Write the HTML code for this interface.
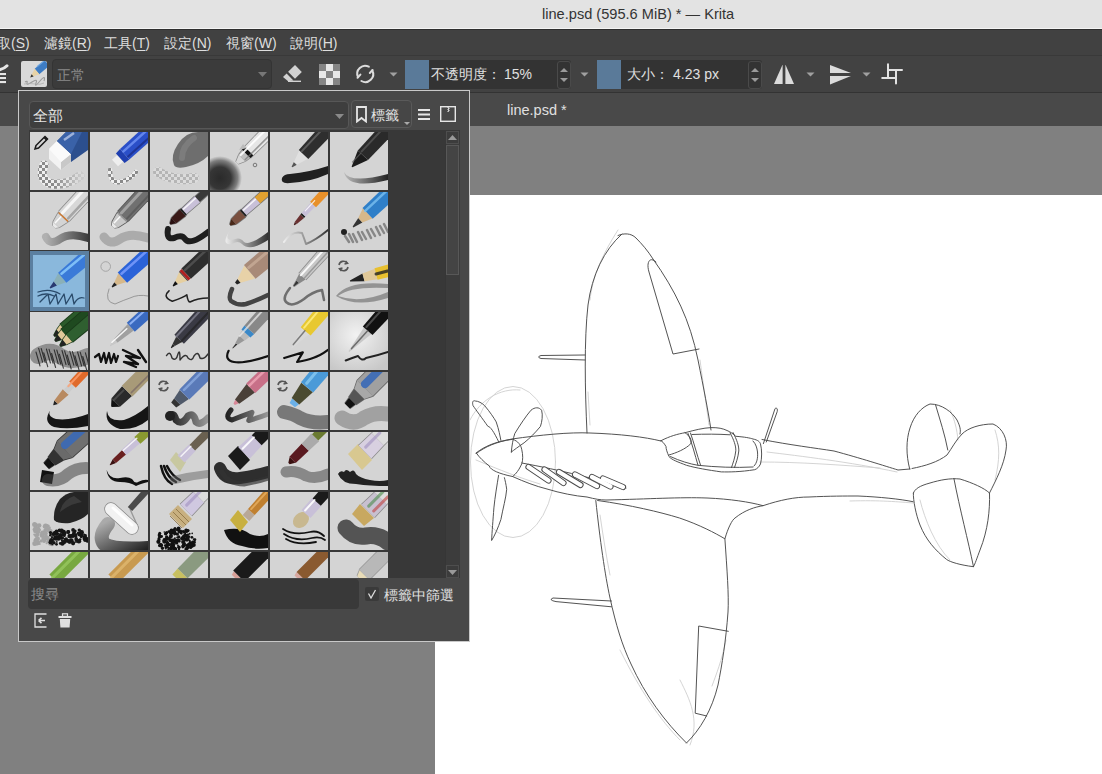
<!DOCTYPE html>
<html><head><meta charset="utf-8">
<style>
*{box-sizing:border-box}
html,body{margin:0;padding:0}
body{width:1102px;height:774px;overflow:hidden;position:relative;background:#808080;font-family:"Liberation Sans",sans-serif;color:#dcdcdc}
.abs{position:absolute}
#title{left:0;top:0;width:1102px;height:29px;background:#e3e3e3;border-bottom:1px solid #f4f4f4}
#title span{position:absolute;left:542px;top:6px;font-size:14.6px;color:#333;white-space:nowrap}
#menubar{left:0;top:29px;width:1102px;height:26px;background:#414141;border-top:1px solid #2e2e2e}
#menubar span{position:absolute;top:5px;font-size:14px;color:#dedede;white-space:nowrap}
#menubar u{text-underline-offset:2px}
#toolbar{left:0;top:55px;width:1102px;height:38px;background:#424242;border-top:1px solid #393939;border-bottom:1px solid #333}
#tabbar{left:0;top:93px;width:1102px;height:33px;background:#494949}
#tabbar span{position:absolute;left:507px;top:9px;font-size:14.5px;color:#e0e0e0}
#canvas{left:435px;top:195px;width:667px;height:579px;background:#fff}
#popup{left:18px;top:90px;width:452px;height:552px;background:#484848;border:1px solid #c9c9c9}
.tile{position:absolute;width:58px;height:58px;background:#d3d3d3;overflow:hidden}
</style></head><body>
<div id="title" class="abs"><span>line.psd (595.6 MiB) * — Krita</span></div>
<div id="menubar" class="abs">
<span style="left:-3px">取(<u>S</u>)</span>
<span style="left:44px">濾鏡(<u>R</u>)</span>
<span style="left:104px">工具(<u>T</u>)</span>
<span style="left:164px">設定(<u>N</u>)</span>
<span style="left:226px">視窗(<u>W</u>)</span>
<span style="left:290px">說明(<u>H</u>)</span>
</div>
<div id="toolbar" class="abs">
<svg class="abs" style="left:0;top:6px" width="14" height="24" viewBox="0 0 14 24"><path d="M-1 7.8 Q4 7 7 3.8" stroke="#e6e6e6" stroke-width="3" fill="none" stroke-linecap="round"/><rect x="0" y="11" width="6" height="2.1" fill="#e6e6e6"/><rect x="0" y="15" width="6" height="2.1" fill="#e6e6e6"/><rect x="0" y="19" width="6" height="2.1" fill="#e6e6e6"/></svg>
<div class="abs" style="left:21px;top:5px;width:26px;height:26px;background:#d9d9d9;border-radius:2px;overflow:hidden">
<svg width="26" height="26" viewBox="0 0 26 26"><path d="M13.7 7.8 L18.3 13.2 L28.3 4.7 L23.7 -0.7 Z" fill="#3d7cc4"/><path d="M16 5.8 L26 -2.5" stroke="#6aa3e0" stroke-width="1.2"/><path d="M13.7 7.8 L18.3 13.2 L9.2 16.4 Z" fill="#e6d2a6"/><path d="M10.6 13.3 L12.6 15.4 L9.2 16.4 Z" fill="#333"/><path d="M4 21 Q7 19 6 22 T11 21 T15 22 T19 20 T23 20" stroke="#9a9a9a" stroke-width="1.1" fill="none"/><path d="M3 23 Q9 22 14 23 T23 22" stroke="#b0b0b0" stroke-width="0.8" fill="none"/></svg></div>
<div class="abs" style="left:52px;top:3px;width:220px;height:30px;background:#3b3b3b;border:1px solid #343434;border-radius:4px">
<span class="abs" style="left:4px;top:7px;font-size:14px;color:#8a8a8a">正常</span>
<svg class="abs" style="left:205px;top:12px" width="9" height="5"><path d="M0 0H9L4.5 5Z" fill="#777"/></svg></div>
<svg class="abs" style="left:276px;top:2px" width="32" height="32" viewBox="0 0 32 32"><path d="M19 7 L25.8 13.9 L19 20.7 L12.1 13.8 Z" fill="#d2d2d2"/><path d="M7 18.9 L10.6 15.4 L17.4 22.6 L12.1 23.3 Z" fill="#d2d2d2"/><rect x="12" y="22.6" width="13" height="1.4" fill="#d2d2d2"/></svg>
<svg class="abs" style="left:319px;top:8px" width="21" height="21" viewBox="0 0 21 21"><rect width="21" height="21" fill="#e8e8e8"/><rect x="0" y="0" width="7" height="7" fill="#858585"/><rect x="14" y="0" width="7" height="7" fill="#858585"/><rect x="7" y="7" width="7" height="7" fill="#858585"/><rect x="0" y="14" width="7" height="7" fill="#858585"/><rect x="14" y="14" width="7" height="7" fill="#858585"/></svg>
<svg class="abs" style="left:350px;top:2px" width="32" height="32" viewBox="0 0 32 32"><path d="M18.8 8.7 A7.9 7.9 0 0 0 8 19" stroke="#dcdcdc" stroke-width="2" fill="none" stroke-linecap="round"/><path d="M11.4 23 A7.9 7.9 0 0 0 22.3 12.5" stroke="#dcdcdc" stroke-width="2" fill="none" stroke-linecap="round"/><path d="M7.5 19.8 L10.4 16.6" stroke="#dcdcdc" stroke-width="2" stroke-linecap="round"/><path d="M22.6 12 L19.8 15" stroke="#dcdcdc" stroke-width="2" stroke-linecap="round"/></svg>
<svg class="abs" style="left:389px;top:16px" width="9" height="5"><path d="M0.5 0.5H8.5L4.5 4.5Z" fill="#a0a0a0"/></svg>
<div class="abs" style="left:405px;top:4px;width:24px;height:29px;background:#5a7a99"></div>
<div class="abs" style="left:429px;top:4px;width:142px;height:29px;background:#333;border-radius:0 3px 3px 0"></div>
<span class="abs" style="left:431px;top:10px;font-size:14px;color:#e0e0e0;white-space:nowrap">不透明度：<span style="margin-left:3px">15%</span></span>
<div class="abs" style="left:557px;top:5px;width:14px;height:28px;border:1px solid #4a4a4a;border-radius:3px"></div>
<svg class="abs" style="left:559px;top:11px" width="10" height="16"><path d="M1 5L5 1L9 5Z" fill="#9a9a9a"/><path d="M1 11L5 15L9 11Z" fill="#9a9a9a"/></svg>
<svg class="abs" style="left:580px;top:16px" width="9" height="5"><path d="M0.5 0.5H8.5L4.5 4.5Z" fill="#a0a0a0"/></svg>
<div class="abs" style="left:597px;top:4px;width:24px;height:29px;background:#5a7a99"></div>
<div class="abs" style="left:621px;top:4px;width:141px;height:29px;background:#333;border-radius:0 3px 3px 0"></div>
<span class="abs" style="left:627px;top:10px;font-size:14px;color:#e0e0e0;white-space:nowrap">大小：<span style="margin-left:4px">4.23 px</span></span>
<div class="abs" style="left:748px;top:5px;width:14px;height:28px;border:1px solid #4a4a4a;border-radius:3px"></div>
<svg class="abs" style="left:750px;top:11px" width="10" height="16"><path d="M1 5L5 1L9 5Z" fill="#9a9a9a"/><path d="M1 11L5 15L9 11Z" fill="#9a9a9a"/></svg>
<svg class="abs" style="left:774px;top:9px" width="21" height="20" viewBox="0 0 21 20"><path d="M8.6 -0.5 L8.6 19 L0 19 Z" fill="#dcdcdc"/><path d="M11.4 -0.5 L11.4 19 L20 19 Z" fill="#dcdcdc"/></svg>
<svg class="abs" style="left:806px;top:16px" width="9" height="5"><path d="M0.5 0.5H8.5L4.5 4.5Z" fill="#a0a0a0"/></svg>
<svg class="abs" style="left:830px;top:9px" width="21" height="20" viewBox="0 0 21 20"><path d="M0 0 L21 8 L0 8 Z" fill="#dcdcdc"/><path d="M0 11 L21 11 L0 19.5 Z" fill="#dcdcdc"/></svg>
<svg class="abs" style="left:862px;top:16px" width="9" height="5"><path d="M0.5 0.5H8.5L4.5 4.5Z" fill="#a0a0a0"/></svg>
<svg class="abs" style="left:876px;top:2px" width="32" height="32" viewBox="0 0 32 32"><path d="M12 6.2 V19.8 M12 12 H26 M20 12 V25.4 M6.2 20 H20" stroke="#e2e2e2" stroke-width="2" fill="none" stroke-linecap="round"/></svg>
</div>
<div id="tabbar" class="abs"><span>line.psd *</span></div>
<div id="canvas" class="abs"></div>
<svg class="abs" style="left:0;top:0" width="1102" height="774" viewBox="0 0 1102 774">
<defs><clipPath id="cv"><rect x="435" y="195" width="667" height="579"/></clipPath></defs>
<g clip-path="url(#cv)" fill="none" stroke-linecap="round" stroke-linejoin="round">
<g stroke="#cfcfcf" stroke-width="0.9">
<ellipse cx="513" cy="462" rx="42.5" ry="75.5"/>
<path d="M470 420 C480 400 500 388 520 390"/>
<path d="M767 452 C800 456 850 462 897 472"/>
<path d="M760 462 C800 462 840 465 880 468"/>
<path d="M850 501 C880 500 900 502 913 503"/>
<path d="M590 300 C592 280 600 258 618 230"/>
<path d="M700 360 C704 390 707 410 709 425"/>
<path d="M588 392 L590 425"/>
<path d="M600 515 C603 535 606 555 610 575"/>
<path d="M680 680 C690 700 700 720 690 745"/>
<path d="M620 650 C640 690 660 720 680 740"/>
<path d="M950 410 C955 420 957 430 958 440"/>
<path d="M995 430 C1000 445 1000 460 995 480"/>
<path d="M920 500 C925 520 935 545 950 560"/>
<path d="M726 640 C722 660 716 675 712 686"/>
<path d="M476 460 C500 470 520 478 540 484"/>
</g>
<g stroke="#4a4a4a" stroke-width="0.95">
<path d="M587 433 C585 390 584 340 588 305 C592 275 604 250 622 234"/>
<path d="M618 235.5 C624 233 631 233 636 238 C642 244 648 251 653 259 C675 290 690 320 698 360 C704 390 708 410 711 430"/>
<path d="M656 262 C650 256 646 262 649 272 L673 354 L699 349"/>
<path d="M585 355 L541 355.5 Q536 357 541 358.5 L585 360"/>
<path d="M476 453 C485 446 495 442 512 439 C540 435 570 432 590 433 C620 434 645 437 661 441"/>
<path d="M661 440.7 C670 436 678 434 685 432.7 C695 430 703 428 711 427.6 C718 427.5 723 428.5 727 430.5 C731 432 733 434 735.8 436.3 C745 437 750 438 753 439 C758 440 760 442 760.5 444 C762 450 762 458 760.5 464 C759 467 757 469 754.7 469.7 C740 472 730 472 721.3 471.9 C708 470 696 468 686.5 465.3 C678 462 672 460 669 456.6 C667 452 666 449 666 446.5 C664 443 662 441 661 440.7 Z"/>
<path d="M685 432.7 C690 436 692 440 690.8 443.6 C686 449 676 453 669 455"/>
<path d="M688 433.4 C692 443 695 455 698 465.3"/>
<path d="M690.5 433 C694 443 697 455 700.5 465"/>
<path d="M730 432.7 C734 440 736 446 735.8 450.8 C735 458 733 463 731.5 467.5"/>
<path d="M733 432.5 C737 440 739 446 738.8 451 C738 458 736 463 734.5 467.5"/>
<path d="M692 434.5 C705 434 718 434 730 434.8"/>
<path d="M670.5 456.6 C680 461 690 464 698 465.3 C715 467 735 468 753 467"/>
<path d="M753 441 C756 444 757 448 757.5 452 C758 458 757 463 754 466"/>
<path d="M762 439.5 C790 445 815 448 834 451 C860 458 885 466 898 470 L910 469"/>
<path d="M763.4 443.6 L775 408.7 C776 407.5 778 408 777.2 411.6 L766.3 442"/>
<path d="M909.7 469 C906 455 906 440 910 428 C914 415 922 407 930 404 C942 404 952 412 957 420 C960 426 961 430 960 434"/>
<path d="M935.5 404.7 C940 420 945 435 947.8 450"/>
<path d="M912 468.5 C925 466 938 462 947 455 C952 448 956 440 962 434 C968 428 980 424 993 424 C1003 428 1008 440 1006 450 C1004 465 996 480 989.5 493"/>
<path d="M913.4 493 C915 489 919 486 930 483 C940 480 950 478 960 479 C973 483 984 488 989.5 493 C990 510 988 530 980 550 C977 558 975 564 973.5 566.7 C960 565 950 562 946.5 559.4 C935 550 926 540 920 525 C916 515 913 500 913.4 493"/>
<path d="M953.9 478.4 C960 510 968 540 973.5 566.7"/>
<path d="M512.5 476.5 C525 482 535 486 547 489 C560 493 575 496 587 497 C595 499 600 500 606 500 C650 499 680 497 707 498 C730 499 750 502 763 505.7 C780 500 795 497 809 497 C830 496 845 496 858 496 C880 497 900 499 913 501.7"/>
<path d="M595.8 500.5 C600 540 605 575 610 598 C616 625 622 645 631 664 C645 695 665 722 686.5 743"/>
<path d="M724.9 538.8 C727 570 729 595 728 612 C726 640 722 665 718 685 C712 710 700 730 686.5 743"/>
<path d="M597.6 500.5 C630 505 660 512 679.5 518 C700 525 715 533 724.9 538.8 C728 528 732 520 735 518 C745 510 755 507 763 505.7"/>
<path d="M728.3 631.3 L698.7 626 L695.2 713.2 L706.7 716"/>
<path d="M611.5 601 L553 598 Q548 600 556 601.6 L611.5 606.8"/>
<path d="M476.5 453.3 C485 447 496 441.6 512.5 439.3 C518 441 521 445 521.8 449.8 C523 455 523 460 521.8 463.7 C519 470 516 474 512.5 476.5 C500 474 490 470 489.3 466 C484 462 479 457 476.5 453.3 Z"/>
<path d="M498.6 441.6 C494 432 490 426 488 426.5 C482 418 476 410 473 405.6 C472 402 473 400 475.3 401 C478 401 482 403 484.6 405.6 C490 412 494 418 496.2 421.9 C499 430 500 436 500.9 440.5"/>
<path d="M511.3 452 C512 445 513 439 514.8 433.5 C520 425 526 416 531 410.2 C535 407 539 407 541.6 410.2 C543 415 542 422 540.4 426.5 C535 433 530 438 524.1 442.8 C518 447 514 450 511.3 452 Z"/>
<path d="M498.6 475.3 C497 485 495 497 493.9 507.9 C493 520 492 532 491.6 540.5 C495 535 498 528 500.9 519.5 C503 508 506 498 506.7 489.3 C506 484 505 480 504.4 477.7"/>
<path d="M521.8 463 C560 470 600 480 626 488"/>
</g>
<g stroke="#4a4a4a" stroke-width="6.2">
<path d="M528.5 467 L548.5 480.5"/><path d="M544.5 469.5 L563.5 483"/><path d="M559 472 L580.5 485"/><path d="M575 474.5 L597 486"/><path d="M592 477 L610.5 486.5"/><path d="M603 478.5 L623 487"/>
</g>
<g stroke="#ffffff" stroke-width="4.3">
<path d="M528.5 467 L548.5 480.5"/><path d="M544.5 469.5 L563.5 483"/><path d="M559 472 L580.5 485"/><path d="M575 474.5 L597 486"/><path d="M592 477 L610.5 486.5"/><path d="M603 478.5 L623 487"/>
</g>
</g></svg>
<div id="popup" class="abs">
<div class="abs" style="left:10px;top:10px;width:320px;height:28px;background:#3e3e3e;border:1px solid #575757;border-radius:4px">
<span class="abs" style="left:3px;top:5px;font-size:14.5px;color:#e6e6e6">全部</span>
<svg class="abs" style="left:305px;top:12px" width="9" height="5"><path d="M0 0H9L4.5 5Z" fill="#8a8a8a"/></svg></div>
<div class="abs" style="left:332px;top:9px;width:61px;height:28px;background:#464646;border:1px solid #5a5a5a;border-radius:4px">
<svg class="abs" style="left:4px;top:5px" width="11" height="17" viewBox="0 0 11 17"><path d="M1 1 H10 V15.5 L5.5 12 L1 15.5 Z" stroke="#e6e6e6" stroke-width="1.8" fill="none"/></svg>
<span class="abs" style="left:19px;top:6px;font-size:14px;color:#e6e6e6">標籤</span>
<svg class="abs" style="left:52px;top:21px" width="6" height="3"><path d="M0 0H6L3 3Z" fill="#aaa"/></svg></div>
<svg class="abs" style="left:399px;top:18px" width="12" height="11" viewBox="0 0 12 11"><rect y="0" width="12" height="2" fill="#e6e6e6"/><rect y="4.5" width="12" height="2" fill="#e6e6e6"/><rect y="9" width="12" height="2" fill="#e6e6e6"/></svg>
<svg class="abs" style="left:421px;top:15px" width="16" height="16" viewBox="0 0 16 16"><rect x="0.7" y="0.7" width="14.6" height="14.6" stroke="#e6e6e6" stroke-width="1.4" fill="none"/><path d="M8 1 v1 h1 v1 h-1 v1 h1 v1 h-1 v1" stroke="#e6e6e6" stroke-width="1" fill="none"/></svg>
<div id="list" class="abs" style="left:10px;top:39px;width:431px;height:448px;background:#383838;overflow:hidden">
<div id="grid" class="abs" style="left:1px;top:2px;width:360px;height:446px"><svg class="abs" style="left:0;top:0" width="360" height="446" viewBox="0 0 360 446"><defs>
<pattern id="chk" width="6" height="6" patternUnits="userSpaceOnUse"><rect width="6" height="6" fill="#f0f0f0"/><rect width="3" height="3" fill="#8a8a8a"/><rect x="3" y="3" width="3" height="3" fill="#8a8a8a"/></pattern>
<pattern id="chk2" width="6" height="6" patternUnits="userSpaceOnUse"><rect width="6" height="6" fill="#e0e0e0"/><rect width="3" height="3" fill="#a8a8a8"/><rect x="3" y="3" width="3" height="3" fill="#a8a8a8"/></pattern>
<radialGradient id="rg1"><stop offset="0" stop-color="#2a2a2a"/><stop offset="0.5" stop-color="#363636"/><stop offset="0.8" stop-color="#444" stop-opacity="0.6"/><stop offset="1" stop-color="#555" stop-opacity="0"/></radialGradient>
<radialGradient id="rg2" cx="0.45" cy="0.4" r="0.7"><stop offset="0" stop-color="#f2f2f2"/><stop offset="1" stop-color="#c8c8c8"/></radialGradient>
<linearGradient id="lg1" x1="0" x2="1"><stop offset="0" stop-color="#bbb"/><stop offset="1" stop-color="#222"/></linearGradient>
<linearGradient id="lg2" x1="0" x2="1"><stop offset="0" stop-color="#aaa"/><stop offset="1" stop-color="#222"/></linearGradient>
<linearGradient id="lg3" x1="0" x2="1"><stop offset="0" stop-color="#eee"/><stop offset="1" stop-color="#333"/></linearGradient>
<clipPath id="tc"><rect width="58" height="58"/></clipPath>
<linearGradient id="fade" x1="0" x2="1"><stop offset="0.3" stop-color="#d4d4d4" stop-opacity="0"/><stop offset="1" stop-color="#d4d4d4" stop-opacity="0.85"/></linearGradient>
<linearGradient id="lg4" x1="0" x2="1"><stop offset="0" stop-color="#222"/><stop offset="1" stop-color="#999"/></linearGradient>
<linearGradient id="lg5" x1="0" y1="0" x2="1" y2="1"><stop offset="0" stop-color="#aaa"/><stop offset="1" stop-color="#222"/></linearGradient>
</defs><g transform="translate(0 0)"><svg width="58" height="58" viewBox="0 0 58 58"><rect width="58" height="58" fill="#d4d4d4"/><path d="M6 13.5 L15 4.5 L17.5 7 L8.5 16 L5 17 Z" fill="none" stroke="#1a1a1a" stroke-width="1.5"/><path d="M13.5 6 L15 4.5 L17.5 7 L16 8.5Z" fill="#1a1a1a"/><path d="M14 33 Q8 48 22 52 Q36 54 50 44" stroke="url(#chk)" stroke-width="9" fill="none" stroke-linecap="round" stroke-linejoin="round" opacity="1"/><path d="M14 33 Q8 48 22 52 Q36 54 50 44" stroke="url(#fade)" stroke-width="10" fill="none" stroke-linecap="round" stroke-linejoin="round" opacity="1"/><path d="M19 17 L27 9 L41 22 L41 30 L31 38 L19 27 Z" fill="#f2f2f2"/><path d="M31 30 L41 22 L41 30 L31 38Z" fill="#c8c8c8"/><path d="M19 17 L27 9 L41 22 L31 30Z" fill="#fafafa"/><path d="M27 9 L36 0 L58 0 L58 18 L41 30 L41 22 Z" fill="#2c4f8e"/><path d="M27 9 L36 0 L52 0 L41 22Z" fill="#3a62a8"/><path d="M34 8 L44 1" stroke="#c8d4f0" stroke-width="2.5" opacity="0.7"/></svg></g><g transform="translate(60 0)"><svg width="58" height="58" viewBox="0 0 58 58"><rect width="58" height="58" fill="#d4d4d4"/><path d="M20 38 Q20 52 30 50 Q40 48 46 40" stroke="url(#chk)" stroke-width="4.5" fill="none" stroke-linecap="round" stroke-linejoin="round" opacity="1"/><path d="M28 34.3 L33.2 29.7 L27.2 23 L22 27.7 Z" fill="#eeeeee"/><path d="M34.6 31.1 L39.3 27.5 L30 17.1 L25.9 21.5 Z" fill="#1f3fb0"/><path d="M39.3 27.5 L73.1 -2.2 L63.1 -13.4 L30 17.1 Z" fill="#2a4fc8"/><path d="M33.4 19.4 L59.4 -4" stroke="#6a8cf0" stroke-width="2.5" opacity="0.9" stroke-linecap="round"/><path d="M38.1 24.6 L64.1 1.2" stroke="#1a2a80" stroke-width="2" opacity="0.7" stroke-linecap="round"/></svg></g><g transform="translate(120 0)"><svg width="58" height="58" viewBox="0 0 58 58"><rect width="58" height="58" fill="#d4d4d4"/><path d="M8 40 Q25 50 44 46" stroke="url(#chk2)" stroke-width="10" fill="none" stroke-linecap="round" stroke-linejoin="round" opacity="0.7"/><path d="M24 33 Q20 24 28 12 Q36 0 48 0 L58 0 L58 24 Q50 32 36 35 Q26 37 24 33Z" fill="#6e6e6e"/><path d="M32 26 Q32 14 44 6" stroke="#8a8a8a" stroke-width="6" fill="none" opacity="0.5" stroke-linecap="round"/></svg></g><g transform="translate(180 0)"><svg width="58" height="58" viewBox="0 0 58 58"><rect width="58" height="58" fill="#d4d4d4"/><circle cx="10" cy="46" r="22" fill="url(#rg1)"/><path d="M28.6 32.6 L35.7 29.8 L28.2 22.3 L25.4 29.4 Z" fill="#888"/><path d="M35.7 29.8 L40.6 26.3 L31.7 17.4 L28.2 22.3 Z" fill="#888"/><path d="M41 26.6 L43.8 23.8 L34.2 14.2 L31.4 17 Z" fill="#888"/><path d="M43.8 23.8 L65.4 2.9 L55.1 -7.4 L34.2 14.2 Z" fill="#888"/><path d="M28.1 32.1 L35.1 29.2 L28.8 22.9 L25.9 29.9 Z" fill="#d8d8d8"/><path d="M35.1 29.2 L40.1 25.7 L32.3 17.9 L28.8 22.9 Z" fill="#c0c0c0"/><path d="M40.4 26.1 L43.3 23.2 L34.8 14.7 L31.9 17.6 Z" fill="#111"/><path d="M43.3 23.2 L64.8 2.4 L55.6 -6.8 L34.8 14.7 Z" fill="#e6e6e6"/><path d="M30.5 23.2 L58.8 -5.1" stroke="#fff" stroke-width="2" opacity="0.9" stroke-linecap="round"/><path d="M35.1 27.8 L63.4 -0.5" stroke="#777" stroke-width="1.5" opacity="0.7" stroke-linecap="round"/><circle cx="45" cy="33" r="1.8" fill="none" stroke="#777" stroke-width="1"/><path d="M29 18 L33 12 L37 16Z" fill="#bbb"/></svg></g><g transform="translate(240 0)"><svg width="58" height="58" viewBox="0 0 58 58"><rect width="58" height="58" fill="#d4d4d4"/><path d="M12 46 Q14 42 20 42 Q40 40 58 34 L58 42 Q40 50 20 51 Q10 52 12 46Z" fill="#202020"/><path d="M22.4 35.3 L26.9 32.7 L23.9 30 L21.6 34.7 Z" fill="#555"/><path d="M26.9 32.7 L38 26.7 L29.2 18.5 L23.9 30 Z" fill="#e0e0e0"/><path d="M38.3 27 L69.8 -5.2 L58.8 -15.5 L28.8 18.1 Z" fill="#2e2e2e"/><path d="M31.7 19.4 L52.2 -2.5" stroke="#666" stroke-width="2" opacity="0.8" stroke-linecap="round"/></svg></g><g transform="translate(300 0)"><svg width="58" height="58" viewBox="0 0 58 58"><rect width="58" height="58" fill="#d4d4d4"/><path d="M14 40 Q20 52 58 42 L58 48 Q18 58 14 40Z" fill="url(#lg1)"/><path d="M22.4 35.3 L38 28.1 L27.8 18.5 L21.6 34.7 Z" fill="#1c1c1c"/><path d="M38 28.1 L69.1 -4.5 L58.1 -14.7 L27.8 18.5 Z" fill="#2a2a2a"/><path d="M22.5 30 L30.7 21.3" stroke="#666" stroke-width="1.2" opacity="0.7" stroke-linecap="round"/><path d="M31.7 19.4 L52.2 -2.5" stroke="#555" stroke-width="2" opacity="0.8" stroke-linecap="round"/></svg></g><g transform="translate(0 60)"><svg width="58" height="58" viewBox="0 0 58 58"><rect width="58" height="58" fill="#d4d4d4"/><path d="M16 45 Q20 54 30 47 Q40 40 58 46" stroke="url(#lg2)" stroke-width="8" fill="none" stroke-linecap="round" stroke-linejoin="round" opacity="0.85"/><path d="M25.7 36.6 L29.6 36.1 L22.5 29.5 L22.3 33.4 Z" fill="#8a8a8a"/><path d="M29.6 36.1 L38.2 30.5 L27.5 20.5 L22.5 29.5 Z" fill="#8a8a8a"/><path d="M38.2 30.5 L39.2 29.4 L28.6 19.4 L27.5 20.5 Z" fill="#8a8a8a"/><path d="M39.6 29.7 L70.6 -2.9 L58.5 -14.2 L28.2 19.1 Z" fill="#8a8a8a"/><path d="M25.1 36 L29 35.5 L23.1 30.1 L22.9 34 Z" fill="#e8e8e8"/><path d="M29 35.5 L37.6 29.9 L28.1 21.1 L23.1 30.1 Z" fill="#d4d4d4"/><path d="M37.6 29.9 L38.6 28.8 L29.1 20 L28.1 21.1 Z" fill="#d07a30"/><path d="M39 29.2 L70.1 -3.4 L59.1 -13.6 L28.8 19.6 Z" fill="#d8d8d8"/><path d="M32.4 20.9 L63 -12" stroke="#fafafa" stroke-width="3" opacity="0.9" stroke-linecap="round"/><path d="M38.2 26.4 L68.9 -6.5" stroke="#9a9a9a" stroke-width="2.5" opacity="0.8" stroke-linecap="round"/><path d="M25.3 30.7 L30.7 24.9" stroke="#fff" stroke-width="1.5" opacity="0.9" stroke-linecap="round"/></svg></g><g transform="translate(60 60)"><svg width="58" height="58" viewBox="0 0 58 58"><rect width="58" height="58" fill="#d4d4d4"/><path d="M14 45 Q20 54 30 47 Q40 40 58 46" stroke="#9a9a9a" stroke-width="9" fill="none" stroke-linecap="round" stroke-linejoin="round" opacity="0.7"/><path d="M24.7 36.6 L28.6 36.1 L21.5 29.5 L21.3 33.4 Z" fill="#555"/><path d="M28.6 36.1 L37.2 30.5 L26.5 20.5 L21.5 29.5 Z" fill="#555"/><path d="M37.2 30.5 L38.2 29.4 L27.6 19.4 L26.5 20.5 Z" fill="#555"/><path d="M38.6 29.7 L69.6 -2.9 L57.5 -14.2 L27.2 19.1 Z" fill="#555"/><path d="M24.1 36 L28 35.5 L22.1 30.1 L21.9 34 Z" fill="#e8e8e8"/><path d="M28 35.5 L36.6 29.9 L27.1 21.1 L22.1 30.1 Z" fill="#c8c8c8"/><path d="M36.6 29.9 L37.6 28.8 L28.1 20 L27.1 21.1 Z" fill="#999"/><path d="M38 29.2 L69.1 -3.4 L58.1 -13.6 L27.8 19.6 Z" fill="#707070"/><path d="M31.4 20.9 L62 -12" stroke="#a8a8a8" stroke-width="3" opacity="0.9" stroke-linecap="round"/><path d="M37.2 26.4 L67.9 -6.5" stroke="#555" stroke-width="2" opacity="0.7" stroke-linecap="round"/><path d="M24.3 30.7 L29.7 24.9" stroke="#fff" stroke-width="1.5" opacity="0.9" stroke-linecap="round"/></svg></g><g transform="translate(120 60)"><svg width="58" height="58" viewBox="0 0 58 58"><rect width="58" height="58" fill="#d4d4d4"/><path d="M18 37 Q16 48 24 46 Q32 42 35 47 Q40 54 58 40" stroke="#1e1e1e" stroke-width="6" fill="none" stroke-linecap="round" stroke-linejoin="round" opacity="1"/><path d="M20.9 33 L26.6 31.8 L20.8 25.5 L19.1 31 Z" fill="#777"/><path d="M26.6 31.8 L36.2 24.6 L29.1 16.7 L20.8 25.5 Z" fill="#777"/><path d="M35.8 24.2 L37.3 22.9 L30.9 15.7 L29.4 17.1 Z" fill="#777"/><path d="M37 22.5 L50.7 10.8 L44.3 3.7 L31.2 16.1 Z" fill="#777"/><path d="M50.4 10.4 L80.4 -16 L74 -23.1 L44.6 4 Z" fill="#777"/><path d="M20.3 32.4 L26.1 31.3 L21.4 26.1 L19.7 31.6 Z" fill="#2a1010"/><path d="M26.1 31.3 L35.6 24 L29.6 17.3 L21.4 26.1 Z" fill="#3a1a18"/><path d="M35.3 23.6 L36.8 22.3 L31.4 16.3 L30 17.7 Z" fill="#222"/><path d="M36.5 21.9 L50.2 10.2 L44.8 4.3 L31.8 16.7 Z" fill="#c8c0d8"/><path d="M49.8 9.8 L79.9 -16.6 L74.5 -22.5 L45.2 4.6 Z" fill="#3a3a3a"/><path d="M33.5 17.1 L45.4 6.4" stroke="#fff" stroke-width="1.5" opacity="0.8" stroke-linecap="round"/></svg></g><g transform="translate(180 60)"><svg width="58" height="58" viewBox="0 0 58 58"><rect width="58" height="58" fill="#d4d4d4"/><path d="M20 38 Q14 48 22 48 Q30 44 34 50 Q40 54 58 40 L58 48 Q40 60 32 52 Q28 48 22 52 Q10 54 20 38Z" fill="url(#lg3)"/><path d="M20.9 34 L26.6 32.8 L20.8 26.5 L19.1 32 Z" fill="#777"/><path d="M26.6 32.8 L36.2 25.6 L29.1 17.7 L20.8 26.5 Z" fill="#777"/><path d="M35.8 25.2 L37.3 23.9 L30.9 16.7 L29.4 18.1 Z" fill="#777"/><path d="M37 23.5 L50.7 11.8 L44.3 4.7 L31.2 17.1 Z" fill="#777"/><path d="M50.7 11.8 L80.8 -14.6 L73.7 -22.5 L44.3 4.7 Z" fill="#777"/><path d="M20.3 33.4 L26.1 32.3 L21.4 27.1 L19.7 32.6 Z" fill="#4a2818"/><path d="M26.1 32.3 L35.6 25 L29.6 18.3 L21.4 27.1 Z" fill="#7a5040"/><path d="M35.3 24.6 L36.8 23.3 L31.4 17.3 L30 18.7 Z" fill="#222"/><path d="M36.5 22.9 L50.2 11.2 L44.8 5.3 L31.8 17.7 Z" fill="#c8c0d8"/><path d="M50.2 11.2 L80.2 -15.2 L74.2 -21.9 L44.8 5.3 Z" fill="#e0a030"/><path d="M33.5 18.1 L45.4 7.4" stroke="#fff" stroke-width="1.5" opacity="0.8" stroke-linecap="round"/></svg></g><g transform="translate(240 60)"><svg width="58" height="58" viewBox="0 0 58 58"><rect width="58" height="58" fill="#d4d4d4"/><path d="M14 50 Q22 38 32 41 Q34 46 36 52 Q46 48 58 38" stroke="url(#lg3)" stroke-width="2" fill="none" stroke-linecap="round" stroke-linejoin="round" opacity="1"/><path d="M24.2 33.2 L27.1 31.8 L24.9 29.8 L23.8 32.8 Z" fill="#4a2020"/><path d="M27.1 31.8 L34 25.9 L30.4 22.5 L24.9 29.8 Z" fill="#6a3030"/><path d="M34 25.9 L35.4 24.5 L31.7 21.1 L30.4 22.5 Z" fill="#222"/><path d="M35.4 24.5 L45.3 14.6 L40.9 10.5 L31.7 21.1 Z" fill="#c8c0d8"/><path d="M46 15.3 L73.7 -13.7 L67.1 -19.8 L40.2 9.8 Z" fill="#e8902a"/><path d="M35.2 18.8 L44.7 8.6" stroke="#fff" stroke-width="1.2" opacity="0.8" stroke-linecap="round"/></svg></g><g transform="translate(300 60)"><svg width="58" height="58" viewBox="0 0 58 58"><rect width="58" height="58" fill="#d4d4d4"/><path d="M15 44 L19 50 M19 42 L23 50 M23 42 L27 50 M28 40 L32 48 M32 40 L36 47 M37 38 L41 46 M41 37 L45 44 M46 35 L50 43 M50 34 L54 41 M54 32 L58 40" stroke="#666" stroke-width="2.5" fill="none" stroke-linecap="round" stroke-linejoin="round" opacity="0.7"/><circle cx="14" cy="40" r="3" fill="#222"/><path d="M23.3 35.4 L32.4 30.4 L28.3 26 L22.7 34.6 Z" fill="#333"/><path d="M32.4 30.4 L42.4 26.5 L32.9 16.2 L28.3 26 Z" fill="#d6b88a"/><path d="M42.7 26.8 L76 -3.5 L65.1 -15.2 L32.5 15.9 Z" fill="#2f7fc8"/><path d="M35.2 18.8 L60.8 -5.1" stroke="#7ac0f0" stroke-width="2.5" opacity="0.8" stroke-linecap="round"/></svg></g><g transform="translate(0 120)"><rect x="-1" y="-1" width="60" height="60" fill="#5b7fa0"/><svg x="3" y="3" width="52" height="52" viewBox="3 3 52 52"><rect width="58" height="58" fill="#8ab8dc"/><path d="M8 40 Q20 36 30 42 M8 44 Q16 40 24 44 M10 50 L18 42 L20 52 L26 42 L28 52 L34 42 L36 52 L42 42 L44 52 Q48 44 54 46" stroke="#2a4a6a" stroke-width="1.3" fill="none" stroke-linecap="round" stroke-linejoin="round" opacity="1"/><path d="M20.3 36.4 L27 33.4 L23.8 29.6 L19.7 35.6 Z" fill="#2a3a70"/><path d="M27 33.4 L36.1 30.3 L28.4 21.1 L23.8 29.6 Z" fill="#8ab0b8"/><path d="M36.4 30.7 L71.5 2.5 L61.9 -9 L28.1 20.7 Z" fill="#3a7ad8"/><path d="M31.5 21.7 L54.5 2.5" stroke="#8fd0ff" stroke-width="2.5" opacity="0.8" stroke-linecap="round"/></svg></g><g transform="translate(60 120)"><svg width="58" height="58" viewBox="0 0 58 58"><rect width="58" height="58" fill="#d4d4d4"/><circle cx="15.7" cy="14.5" r="4.8" fill="none" stroke="#999" stroke-width="0.8"/><path d="M19 37 Q14 50 25 52 Q34 48 40 46 Q48 42 58 44" stroke="#888" stroke-width="1" fill="none" stroke-linecap="round" stroke-linejoin="round" opacity="0.8"/><path d="M22.3 35.4 L27.1 33.1 L24.4 30.2 L21.7 34.6 Z" fill="#222"/><path d="M27.1 33.1 L36.4 30.1 L28.4 21.2 L24.4 30.2 Z" fill="#d6b88a"/><path d="M37.1 30.8 L70.9 1.1 L60.8 -10.1 L27.7 20.4 Z" fill="#2a62d8"/><path d="M31.5 21.7 L57.6 -1.7" stroke="#7fa0ff" stroke-width="2.5" opacity="0.8" stroke-linecap="round"/></svg></g><g transform="translate(120 120)"><svg width="58" height="58" viewBox="0 0 58 58"><rect width="58" height="58" fill="#d4d4d4"/><path d="M19 38.8 Q12 45 22.3 49.3 Q34 45 36.8 42.8 Q38 50 40 50 Q48 46 58 46" stroke="#222" stroke-width="1.6" fill="none" stroke-linecap="round" stroke-linejoin="round" opacity="1"/><path d="M23.3 34.4 L28 32.1 L25.3 29.1 L22.7 33.6 Z" fill="#111"/><path d="M28 32.1 L37.3 28.8 L29.1 20.1 L25.3 29.1 Z" fill="#e6cfa0"/><path d="M37.3 28.8 L38.4 28.5 L29.5 19 L29.1 20.1 Z" fill="#333"/><path d="M38.4 28.5 L40.6 26.5 L31.7 17 L29.5 19 Z" fill="#b02020"/><path d="M40.9 26.8 L74.2 -3.5 L64 -14.5 L31.4 16.6 Z" fill="#2e2e2e"/><path d="M35.2 17.8 L60.8 -6.1" stroke="#555" stroke-width="2.5" opacity="0.8" stroke-linecap="round"/></svg></g><g transform="translate(180 120)"><svg width="58" height="58" viewBox="0 0 58 58"><rect width="58" height="58" fill="#d4d4d4"/><path d="M22 37 Q18 46 21 49 Q28 54 36 52 Q48 48 58 43" stroke="#333" stroke-width="4.5" fill="none" stroke-linecap="round" stroke-linejoin="round" opacity="0.9"/><path d="M27 32.6 L30.7 30.8 L27.5 27 L25 30.4 Z" fill="#222"/><path d="M30.7 30.8 L45.3 26.4 L34.3 13.4 L27.5 27 Z" fill="#e8d2a8"/><path d="M45.6 26.8 L80.4 -1.7 L68.2 -16.3 L34 13 Z" fill="#a88a78"/><path d="M38.7 15.6 L65.6 -6.9" stroke="#c8ac98" stroke-width="3" opacity="0.8" stroke-linecap="round"/></svg></g><g transform="translate(240 120)"><svg width="58" height="58" viewBox="0 0 58 58"><rect width="58" height="58" fill="#d4d4d4"/><path d="M20 36 Q12 46 16 50 Q22 56 34 47 Q42 40 52 38 L54 48" stroke="#555" stroke-width="2.5" fill="none" stroke-linecap="round" stroke-linejoin="round" opacity="0.8"/><path d="M24.4 35 L29.3 31.4 L25.9 28.3 L22.8 33.6 Z" fill="#8a8a8a"/><path d="M29.3 31.4 L35.5 27.5 L29.1 21.8 L25.9 28.3 Z" fill="#8a8a8a"/><path d="M36.2 28.2 L67.1 -4.6 L57.7 -13 L28.4 21.1 Z" fill="#8a8a8a"/><path d="M23.8 34.5 L28.7 30.8 L26.5 28.8 L23.4 34.1 Z" fill="#333"/><path d="M28.7 30.8 L34.9 27 L29.7 22.3 L26.5 28.8 Z" fill="#888"/><path d="M35.6 27.7 L66.5 -5.1 L58.3 -12.5 L29 21.6 Z" fill="#c8c8c8"/><path d="M30.8 23.3 L57.6 -6.4" stroke="#fff" stroke-width="2" opacity="0.9" stroke-linecap="round"/><path d="M34.2 26.3 L60.9 -3.4" stroke="#888" stroke-width="1.5" opacity="0.7" stroke-linecap="round"/></svg></g><g transform="translate(300 120)"><svg width="58" height="58" viewBox="0 0 58 58"><rect width="58" height="58" fill="#d4d4d4"/><g transform="translate(9 9)" fill="none" stroke="#555" stroke-width="1.6"><path d="M0 4 A4.5 4.5 0 0 1 8 2"/><path d="M9 6 A4.5 4.5 0 0 1 1 8"/><path d="M6.5 0 L8.5 2.3 L5.5 3" /><path d="M2.5 10 L0.5 7.7 L3.5 7"/></g><path d="M6 44 Q18 28 58 32 L58 36 Q20 34 8 44 Q30 52 58 40 L58 46 Q26 56 6 44Z" fill="#777" opacity="0.7"/><path d="M20.1 29.5 L34.6 29.2 L32.5 21.5 L19.9 28.5 Z" fill="#222"/><path d="M34.6 29.2 L47.5 27.3 L44.7 16.7 L32.5 21.5 Z" fill="#e0c898"/><path d="M47.6 27.8 L86.4 17.9 L83 5.4 L44.5 16.2 Z" fill="#e8c030"/><path d="M46.1 22 L84.7 11.7" stroke="#222" stroke-width="3" opacity="0.8" stroke-linecap="round"/></svg></g><g transform="translate(0 180)"><svg width="58" height="58" viewBox="0 0 58 58"><rect width="58" height="58" fill="#d4d4d4"/><path d="M8 44 Q20 36 30 44 Q42 52 58 44" stroke="#555" stroke-width="16" fill="none" stroke-linecap="round" stroke-linejoin="round" opacity="0.55"/><path d="M6.0 40.0 l4.0 14.0 M8.6 36.2 l4.0 14.0 M11.2 36.5 l4.0 14.0 M13.8 40.8 l4.0 14.0 M16.4 37.0 l4.0 14.0 M19.0 37.2 l4.0 14.0 M21.6 41.5 l4.0 14.0 M24.2 37.8 l4.0 14.0 M26.8 38.0 l4.0 14.0 M29.4 42.2 l4.0 14.0 M32.0 38.5 l4.0 14.0 M34.6 38.8 l4.0 14.0 M37.2 43.0 l4.0 14.0 M39.8 39.2 l4.0 14.0 M42.4 39.5 l4.0 14.0 M45.0 43.8 l4.0 14.0 M47.6 40.0 l4.0 14.0 M50.2 40.2 l4.0 14.0 M52.8 44.5 l4.0 14.0 M55.4 40.8 l4.0 14.0 " stroke="#1a1a1a" stroke-width="1.1" fill="none" stroke-linecap="round" stroke-linejoin="round" opacity="0.8"/><path d="M24.8 25 L31 23.1 L26.2 17.2 L23.2 23 Z" fill="#1a3a1a"/><path d="M31 23.1 L36.6 20.3 L29.8 12.2 L26.2 17.2 Z" fill="#1a3a1a"/><path d="M36.9 20.7 L67.9 -4.6 L59.8 -14.3 L29.5 11.8 Z" fill="#1a3a1a"/><path d="M24.3 24.4 L30.5 22.4 L26.7 17.8 L23.7 23.6 Z" fill="#222"/><path d="M30.5 22.4 L36.1 19.7 L30.3 12.8 L26.7 17.8 Z" fill="#e0c898"/><path d="M36.4 20.1 L67.4 -5.2 L60.3 -13.6 L30 12.5 Z" fill="#2a5a2a"/><path d="M25.8 30 L32 28.1 L27.2 22.2 L24.2 28 Z" fill="#1a3a1a"/><path d="M32 28.1 L37.6 25.3 L30.8 17.2 L27.2 22.2 Z" fill="#1a3a1a"/><path d="M37.9 25.7 L68.9 0.4 L60.8 -9.3 L30.5 16.8 Z" fill="#1a3a1a"/><path d="M25.3 29.4 L31.5 27.4 L27.7 22.8 L24.7 28.6 Z" fill="#222"/><path d="M31.5 27.4 L37.1 24.7 L31.3 17.8 L27.7 22.8 Z" fill="#e0c898"/><path d="M37.4 25.1 L68.4 -0.2 L61.3 -8.6 L31 17.5 Z" fill="#1f4a20"/><path d="M30.8 35 L37 33.1 L32.2 27.2 L29.2 33 Z" fill="#1a3a1a"/><path d="M37 33.1 L42.6 30.3 L35.8 22.2 L32.2 27.2 Z" fill="#1a3a1a"/><path d="M42.9 30.7 L73.9 5.4 L65.8 -4.3 L35.5 21.8 Z" fill="#1a3a1a"/><path d="M30.3 34.4 L36.5 32.4 L32.7 27.8 L29.7 33.6 Z" fill="#222"/><path d="M36.5 32.4 L42.1 29.7 L36.3 22.8 L32.7 27.8 Z" fill="#e0c898"/><path d="M42.4 30.1 L73.4 4.8 L66.3 -3.6 L36 22.5 Z" fill="#2f5f30"/></svg></g><g transform="translate(60 180)"><svg width="58" height="58" viewBox="0 0 58 58"><rect width="58" height="58" fill="#d4d4d4"/><path d="M5 45 L9 42 L11 50 L14 41 L16 51 L19 41 L21 51 L24 42 L26 50 L28 44" stroke="#111" stroke-width="2.2" fill="none" stroke-linecap="round" stroke-linejoin="round" opacity="1"/><path d="M33 38 L50 46 L36 44 L48 52 L34 50 L46 55 M48 38 L56 50" stroke="#111" stroke-width="2.4" fill="none" stroke-linecap="round" stroke-linejoin="round" opacity="1"/><path d="M20.2 34.2 L27.6 30.5 L24.3 26.8 L19.8 33.8 Z" fill="#c8c8c8"/><path d="M27.6 30.5 L43.8 18.6 L37.8 11.9 L24.3 26.8 Z" fill="#a0a0a0"/><path d="M44.8 19.7 L74.9 -6.7 L66.2 -16.3 L36.8 10.8 Z" fill="#3a6ac0"/><path d="M22 30.2 L36.8 16.8" stroke="#fff" stroke-width="1.5" opacity="0.9" stroke-linecap="round"/><path d="M40.3 11.7 L62.6 -8.4" stroke="#9fc0ff" stroke-width="2" opacity="0.8" stroke-linecap="round"/></svg></g><g transform="translate(120 180)"><svg width="58" height="58" viewBox="0 0 58 58"><rect width="58" height="58" fill="#d4d4d4"/><path d="M16.5 43.6 Q20 38 22 46 Q26 50 28 42 Q30 36 30 48 Q36 40 38 46 Q42 50 44 44 Q48 38 50 46 Q54 48 58 42" stroke="#333" stroke-width="1.4" fill="none" stroke-linecap="round" stroke-linejoin="round" opacity="1"/><path d="M21.2 36.2 L24.8 34.1 L22.6 32.1 L20.8 35.8 Z" fill="#222"/><path d="M24.8 34.1 L32.1 30 L26.3 24.5 L22.6 32.1 Z" fill="#333"/><path d="M33.9 31.7 L65.4 -0.6 L54.4 -10.8 L24.4 22.8 Z" fill="#3a3a44"/><path d="M26.3 24.5 L53.5 -4.8" stroke="#8a8a99" stroke-width="2" opacity="0.7" stroke-linecap="round"/><path d="M31.4 29.3 L58.7 0" stroke="#222" stroke-width="2" opacity="0.7" stroke-linecap="round"/></svg></g><g transform="translate(180 180)"><svg width="58" height="58" viewBox="0 0 58 58"><rect width="58" height="58" fill="#d4d4d4"/><path d="M18.6 38.8 Q14 48 24 50 Q34 52 58 44" stroke="#111" stroke-width="2.2" fill="none" stroke-linecap="round" stroke-linejoin="round" opacity="1"/><path d="M22.8 36.5 L27.4 32.5 L25.9 31.2 L22.4 36.1 Z" fill="#333"/><path d="M27.7 32.8 L34.6 28.2 L29.4 23.6 L25.5 30.8 Z" fill="#999"/><path d="M34.9 28.6 L39.7 24.8 L32.3 18.1 L29 23.2 Z" fill="#bbb"/><path d="M40.4 25.5 L44.2 22.1 L34.5 13.4 L31.5 17.4 Z" fill="#3a88c8"/><path d="M44.2 22.1 L71.3 -7.3 L60.9 -16.7 L34.5 13.4 Z" fill="#888"/><path d="M29.7 23.9 L53.2 -2.1" stroke="#eee" stroke-width="2" opacity="0.7" stroke-linecap="round"/></svg></g><g transform="translate(240 180)"><svg width="58" height="58" viewBox="0 0 58 58"><rect width="58" height="58" fill="#d4d4d4"/><path d="M14.2 46 L32.8 40.4 L27.1 50 Q38 48 43 46 Q50 44 58 38" stroke="#111" stroke-width="2.2" fill="none" stroke-linecap="round" stroke-linejoin="round" opacity="1"/><path d="M21.9 36.6 L39.1 22.3 L32.2 16.6 L21.1 36 Z" fill="#d8d8d8"/><path d="M40.6 23.6 L70.3 -10.2 L58.8 -19.8 L30.7 15.3 Z" fill="#e8c830"/><path d="M23.3 32.6 L34.9 18.8" stroke="#555" stroke-width="1.5" opacity="0.7" stroke-linecap="round"/><path d="M34.2 15.7 L53.5 -7.3" stroke="#fff08a" stroke-width="2" opacity="0.8" stroke-linecap="round"/></svg></g><g transform="translate(300 180)"><svg width="58" height="58" viewBox="0 0 58 58"><rect width="58" height="58" fill="#d4d4d4"/><rect width="58" height="58" fill="url(#rg2)"/><path d="M15.7 48.5 Q22 46 28 44 Q32 50 36 46 Q46 44 58 40" stroke="#222" stroke-width="2" fill="none" stroke-linecap="round" stroke-linejoin="round" opacity="1"/><path d="M19.3 39.9 L41.4 22.1 L33.9 15.4 L18.5 39.3 Z" fill="#c8c8c8"/><path d="M42.5 23.1 L73.3 -9.6 L62.2 -19.7 L32.8 14.4 Z" fill="#111"/><path d="M21.6 36.6 L37.6 18.8" stroke="#555" stroke-width="1.5" opacity="0.8" stroke-linecap="round"/><path d="M36.4 15 L56.4 -7.3" stroke="#555" stroke-width="2" opacity="0.8" stroke-linecap="round"/></svg></g><g transform="translate(0 240)"><svg width="58" height="58" viewBox="0 0 58 58"><rect width="58" height="58" fill="#d4d4d4"/><path d="M21 37 Q16 44 26 47 Q40 49 58 42 L58 54 Q38 58 24 55 Q12 50 21 37Z" fill="#151515"/><path d="M23.6 33.3 L28 31.9 L24.3 28.5 L23.2 32.9 Z" fill="#222"/><path d="M28 31.9 L38.6 22.7 L32.8 17.2 L24.3 28.5 Z" fill="#b88a60"/><path d="M37.9 22 L44.7 14.7 L40.3 10.6 L33.5 17.9 Z" fill="#ccc"/><path d="M45.8 15.7 L73.4 -13.2 L66.1 -20 L39.2 9.6 Z" fill="#e06a2a"/><path d="M38.3 14.2 L58.8 -7.8" stroke="#ffa070" stroke-width="2" opacity="0.8" stroke-linecap="round"/></svg></g><g transform="translate(60 240)"><svg width="58" height="58" viewBox="0 0 58 58"><rect width="58" height="58" fill="#d4d4d4"/><path d="M17 39 Q18 50 34 48 Q46 44 58 34 L58 48 Q46 58 30 57 Q14 52 17 39Z" fill="#151515"/><path d="M21.9 35.1 L30 34.7 L21.5 26.2 L21.1 34.3 Z" fill="#111"/><path d="M30 34.7 L42 24.1 L32.1 14.2 L21.5 26.2 Z" fill="#2a2a2a"/><path d="M42.4 24.4 L70.6 -3.8 L60 -14.4 L31.8 13.8 Z" fill="#a89a78"/><path d="M23.6 28.3 L33.5 18.4" stroke="#555" stroke-width="2" opacity="0.7" stroke-linecap="round"/><path d="M41.3 20.6 L62.5 -0.7" stroke="#766" stroke-width="1.5" opacity="0.7" stroke-linecap="round"/></svg></g><g transform="translate(120 240)"><svg width="58" height="58" viewBox="0 0 58 58"><rect width="58" height="58" fill="#d4d4d4"/><g transform="translate(9 9)" fill="none" stroke="#555" stroke-width="1.6"><path d="M0 4 A4.5 4.5 0 0 1 8 2"/><path d="M9 6 A4.5 4.5 0 0 1 1 8"/><path d="M6.5 0 L8.5 2.3 L5.5 3" /><path d="M2.5 10 L0.5 7.7 L3.5 7"/></g><path d="M20 44 Q24 40 26 48 Q32 54 38 44 Q44 40 46 50 Q50 54 58 46" stroke="url(#lg4)" stroke-width="7" fill="none" stroke-linecap="round" stroke-linejoin="round" opacity="1"/><circle cx="20" cy="44" r="5" fill="#222"/><path d="M26.2 35.6 L30.4 32.7 L24.1 26.4 L21.2 30.6 Z" fill="#333"/><path d="M30.4 32.7 L38.9 27.1 L29.7 17.9 L24.1 26.4 Z" fill="#505a6a"/><path d="M39.3 27.4 L67.9 -0.5 L57.3 -11.1 L29.4 17.5 Z" fill="#5a7ab8"/><path d="M34 17.9 L55.2 -3.3" stroke="#8aaae0" stroke-width="2.5" opacity="0.8" stroke-linecap="round"/></svg></g><g transform="translate(180 240)"><svg width="58" height="58" viewBox="0 0 58 58"><rect width="58" height="58" fill="#d4d4d4"/><path d="M21 38 Q14 46 22 48 Q32 44 42 40.4 L38.8 48.5 Q48 46 58 42" stroke="url(#lg4)" stroke-width="5" fill="none" stroke-linecap="round" stroke-linejoin="round" opacity="1"/><path d="M24.9 33 L28.8 31.3 L25.3 27.7 L23.5 31.6 Z" fill="#d88898"/><path d="M29.2 31.7 L44.9 20.6 L36.6 12 L25 27.4 Z" fill="#4a4038"/><path d="M45.3 21 L74.4 -6.4 L64.7 -16.5 L36.2 11.6 Z" fill="#c87088"/><path d="M39.4 13.5 L61 -7.4" stroke="#f0a8b8" stroke-width="2.5" opacity="0.8" stroke-linecap="round"/></svg></g><g transform="translate(240 240)"><svg width="58" height="58" viewBox="0 0 58 58"><rect width="58" height="58" fill="#d4d4d4"/><g transform="translate(8 9)" fill="none" stroke="#555" stroke-width="1.6"><path d="M0 4 A4.5 4.5 0 0 1 8 2"/><path d="M9 6 A4.5 4.5 0 0 1 1 8"/><path d="M6.5 0 L8.5 2.3 L5.5 3" /><path d="M2.5 10 L0.5 7.7 L3.5 7"/></g><path d="M14 40 Q24 42 30 46 Q42 52 58 50" stroke="#3a3a3a" stroke-width="14" fill="none" stroke-linecap="round" stroke-linejoin="round" opacity="0.6"/><path d="M25 35.3 L29 32.2 L22.1 26.4 L19.6 30.9 Z" fill="#6ab0e8"/><path d="M29.3 32.5 L42.8 20.3 L31.3 10.7 L21.7 26.1 Z" fill="#4a4a30"/><path d="M43.2 20.6 L69.3 -9.7 L56.3 -20.6 L31 10.3 Z" fill="#4a9ad8"/><path d="M36.7 11.3 L56 -11.7" stroke="#8acaf0" stroke-width="3" opacity="0.8" stroke-linecap="round"/></svg></g><g transform="translate(300 240)"><svg width="58" height="58" viewBox="0 0 58 58"><rect width="58" height="58" fill="#d4d4d4"/><path d="M12 46 Q24 54 34 46 Q44 40 58 42" stroke="#777" stroke-width="15" fill="none" stroke-linecap="round" stroke-linejoin="round" opacity="0.55"/><path d="M20.3 37 L26 32.8 L18.5 25.3 L14.3 31 Z" fill="#666"/><path d="M26.4 33.2 L34.8 27.5 L23.8 16.5 L18.1 24.9 Z" fill="#666"/><path d="M34.8 27.5 L43.3 24.7 L26.6 8 L23.8 16.5 Z" fill="#666"/><path d="M43.3 24.7 L71.6 -3.6 L54.9 -20.3 L26.6 8 Z" fill="#666"/><path d="M19.8 36.5 L25.4 32.2 L19.1 25.9 L14.8 31.5 Z" fill="#111"/><path d="M25.8 32.6 L34.3 26.9 L24.4 17 L18.7 25.5 Z" fill="#555"/><path d="M34.3 26.9 L42.8 24.1 L27.2 8.5 L24.4 17 Z" fill="#a8a8a8"/><path d="M42.8 24.1 L71 -4.2 L55.5 -19.7 L27.2 8.5 Z" fill="#a0a0a0"/><path d="M35 12.1 L56.2 -9.1" stroke="#3a6ab8" stroke-width="8" opacity="0.9" stroke-linecap="round"/></svg></g><g transform="translate(0 300)"><svg width="58" height="58" viewBox="0 0 58 58"><rect width="58" height="58" fill="#d4d4d4"/><path d="M12 38 L24 40 L22 52 L10 50Z" fill="#111"/><path d="M18 48 Q30 50 38 42 Q46 36 56 36" stroke="#444" stroke-width="12" fill="none" stroke-linecap="round" stroke-linejoin="round" opacity="0.55"/><path d="M19.1 37.2 L24.9 33.3 L17.9 25.4 L13.3 30.8 Z" fill="#333"/><path d="M25.3 33.6 L34.1 28.4 L23.6 16.8 L17.5 25 Z" fill="#333"/><path d="M34.1 28.4 L42.7 26 L26.9 8.5 L23.6 16.8 Z" fill="#333"/><path d="M42.7 26 L72.4 -0.7 L56.6 -18.3 L26.9 8.5 Z" fill="#333"/><path d="M18.5 36.6 L24.4 32.7 L18.4 26 L13.9 31.4 Z" fill="#111"/><path d="M24.7 33 L33.5 27.8 L24.1 17.4 L18.1 25.6 Z" fill="#333"/><path d="M33.5 27.8 L42.1 25.4 L27.4 9.1 L24.1 17.4 Z" fill="#6a6a6a"/><path d="M42.1 25.4 L71.9 -1.3 L57.1 -17.7 L27.4 9.1 Z" fill="#707070"/><path d="M35 13 L57.3 -7" stroke="#3a6ab8" stroke-width="8" opacity="0.9" stroke-linecap="round"/></svg></g><g transform="translate(60 300)"><svg width="58" height="58" viewBox="0 0 58 58"><rect width="58" height="58" fill="#d4d4d4"/><path d="M16.6 38 Q20 48 30 46 Q38 44 42 47 Q45 52 48 50 Q54 47 58 48 L58 50 Q50 52 46 54 Q40 50 30 50 Q18 50 16.6 38Z" fill="#111"/><path d="M20.1 33.3 L26 30.9 L22.7 27.2 L19.7 32.9 Z" fill="#3a1010"/><path d="M26 30.9 L36 22.6 L32 18.2 L22.7 27.2 Z" fill="#6a2020"/><path d="M36.4 23 L50.1 11.3 L44.7 5.4 L31.7 17.8 Z" fill="#c8c0d8"/><path d="M50.4 11.7 L80.5 -14.7 L73.8 -22.1 L44.4 5 Z" fill="#8a9a30"/><path d="M33.4 18.2 L46.8 6.2" stroke="#fff" stroke-width="1.5" opacity="0.8" stroke-linecap="round"/></svg></g><g transform="translate(120 300)"><svg width="58" height="58" viewBox="0 0 58 58"><rect width="58" height="58" fill="#d4d4d4"/><path d="M11 34 Q14 48 22 52 M14 34 Q18 46 26 50 M17 34 Q22 44 30 48" stroke="#111" stroke-width="2.5" fill="none" stroke-linecap="round" stroke-linejoin="round" opacity="1"/><path d="M24 48 Q40 44 58 42" stroke="#666" stroke-width="8" fill="none" stroke-linecap="round" stroke-linejoin="round" opacity="0.5"/><path d="M20 28 L26 20 L36 30 L30 40Z" fill="#c8c8a0"/><path d="M34.5 30.5 L45.5 18.9 L39.1 12.5 L27.5 23.5 Z" fill="#c8c0d8"/><path d="M45.1 18.5 L73.8 -9.4 L67.4 -15.8 L39.5 12.9 Z" fill="#6a6050"/><path d="M31 24.2 L40.9 14.3" stroke="#fff" stroke-width="1.5" opacity="0.8" stroke-linecap="round"/></svg></g><g transform="translate(180 300)"><svg width="58" height="58" viewBox="0 0 58 58"><rect width="58" height="58" fill="#d4d4d4"/><path d="M10 36 Q14 48 30 46 Q44 44 58 40" stroke="#111" stroke-width="12" fill="none" stroke-linecap="round" stroke-linejoin="round" opacity="0.85"/><path d="M12 40 Q18 52 34 52 Q46 50 58 46" stroke="#333" stroke-width="5" fill="none" stroke-linecap="round" stroke-linejoin="round" opacity="0.7"/><path d="M18 24 L28 14 L40 28 L30 38Z" fill="#1a1a1a"/><path d="M39.7 26.7 L52 13.6 L41.4 3 L28.3 15.3 Z" fill="#c8c0d8"/><path d="M51.7 13.2 L80.3 -14.7 L69.7 -25.3 L41.8 3.3 Z" fill="#1a1a1a"/><path d="M32.6 16.8 L43.9 5.4" stroke="#fff" stroke-width="2" opacity="0.9" stroke-linecap="round"/></svg></g><g transform="translate(240 300)"><svg width="58" height="58" viewBox="0 0 58 58"><rect width="58" height="58" fill="#d4d4d4"/><path d="M16 40 Q26 38 36 44 Q46 48 58 42" stroke="#555" stroke-width="11" fill="none" stroke-linecap="round" stroke-linejoin="round" opacity="0.6"/><path d="M19.7 32.2 L25.4 30.8 L19.7 25.1 L18.3 30.8 Z" fill="#3a1010"/><path d="M25.7 31.1 L38.8 18.8 L31.7 11.7 L19.4 24.8 Z" fill="#5a1a20"/><path d="M38.8 18.8 L49.1 9.2 L41.3 1.4 L31.7 11.7 Z" fill="#aaa"/><path d="M48.3 8.5 L77 -19.4 L69.9 -26.5 L42 2.2 Z" fill="#6a7a30"/></svg></g><g transform="translate(300 300)"><svg width="58" height="58" viewBox="0 0 58 58"><rect width="58" height="58" fill="#d4d4d4"/><path d="M8 42 Q10 38 14 40 Q16 36 20 40 Q24 36 26 42 Q30 46 40 48 Q50 50 58 48 L58 54 Q40 54 26 52 Q12 52 8 42Z" fill="#222"/><path d="M18 22 L28 12 L42 28 L32 38Z" fill="#d8c890"/><path d="M41.9 26.9 L54.3 13.8 L41.2 0.7 L28.1 13.1 Z" fill="#888"/><path d="M54.3 13.8 L82.6 -14.4 L69.4 -27.6 L41.2 0.7 Z" fill="#888"/><path d="M41.4 26.4 L53.7 13.3 L41.7 1.3 L28.6 13.6 Z" fill="#d8d0e0"/><path d="M53.7 13.3 L82 -15 L70 -27 L41.7 1.3 Z" fill="#ddd"/><path d="M35.7 15.1 L49.8 0.9" stroke="#a090c0" stroke-width="3" opacity="0.6" stroke-linecap="round"/></svg></g><g transform="translate(0 360)"><svg width="58" height="58" viewBox="0 0 58 58"><rect width="58" height="58" fill="#d4d4d4"/><g fill="#999" opacity="0.8"><circle cx="12.1" cy="43.2" r="2.5"/><circle cx="12.4" cy="42.2" r="1.9"/><circle cx="7.3" cy="42.2" r="2.0"/><circle cx="18.3" cy="33.9" r="1.5"/><circle cx="5.6" cy="48.2" r="2.1"/><circle cx="4.8" cy="51.6" r="2.5"/><circle cx="15.8" cy="44.3" r="1.3"/><circle cx="4.3" cy="42.6" r="1.1"/><circle cx="7.4" cy="36.8" r="1.0"/><circle cx="12.4" cy="40.8" r="2.3"/><circle cx="13.3" cy="44.8" r="1.8"/><circle cx="15.9" cy="41.1" r="1.4"/><circle cx="22.0" cy="51.9" r="2.3"/><circle cx="16.7" cy="38.3" r="1.4"/><circle cx="9.2" cy="33.4" r="2.2"/><circle cx="11.2" cy="48.9" r="1.6"/><circle cx="21.2" cy="48.9" r="1.0"/><circle cx="7.8" cy="50.2" r="1.8"/><circle cx="21.6" cy="39.9" r="1.1"/><circle cx="15.3" cy="47.6" r="1.4"/><circle cx="5.6" cy="38.7" r="2.5"/><circle cx="17.6" cy="34.4" r="1.4"/><circle cx="5.8" cy="33.2" r="2.3"/><circle cx="7.2" cy="43.2" r="1.7"/><circle cx="7.4" cy="46.6" r="1.2"/><circle cx="15.6" cy="34.3" r="1.7"/><circle cx="7.8" cy="37.4" r="2.6"/><circle cx="18.5" cy="38.1" r="2.4"/><circle cx="7.8" cy="39.9" r="2.4"/><circle cx="15.6" cy="34.0" r="2.6"/><circle cx="7.8" cy="37.2" r="2.2"/><circle cx="9.9" cy="37.9" r="1.1"/><circle cx="5.6" cy="43.7" r="1.4"/><circle cx="14.8" cy="39.4" r="1.7"/><circle cx="21.3" cy="41.7" r="1.9"/><circle cx="19.6" cy="35.7" r="1.2"/><circle cx="20.4" cy="48.4" r="1.4"/><circle cx="7.4" cy="46.8" r="2.5"/><circle cx="7.5" cy="51.0" r="2.4"/><circle cx="14.9" cy="40.4" r="1.2"/><circle cx="4.7" cy="51.3" r="1.4"/><circle cx="16.7" cy="37.1" r="2.3"/><circle cx="14.7" cy="37.9" r="1.3"/><circle cx="17.0" cy="33.4" r="1.4"/><circle cx="14.1" cy="49.0" r="2.0"/><circle cx="9.0" cy="50.3" r="1.3"/><circle cx="4.3" cy="37.4" r="1.7"/><circle cx="5.1" cy="35.5" r="1.6"/><circle cx="14.3" cy="34.6" r="1.6"/><circle cx="20.0" cy="51.6" r="2.1"/><circle cx="16.4" cy="43.7" r="1.2"/><circle cx="4.6" cy="32.4" r="2.5"/><circle cx="16.6" cy="51.3" r="1.0"/><circle cx="15.5" cy="41.6" r="2.2"/><circle cx="9.7" cy="52.0" r="1.1"/><circle cx="13.8" cy="46.7" r="2.4"/><circle cx="17.3" cy="46.1" r="2.3"/><circle cx="20.5" cy="39.0" r="2.1"/><circle cx="20.2" cy="49.4" r="1.7"/><circle cx="18.2" cy="49.3" r="1.9"/></g><g fill="#151515" opacity="1"><circle cx="38.0" cy="49.1" r="1.9"/><circle cx="34.2" cy="41.5" r="2.1"/><circle cx="46.2" cy="48.0" r="1.7"/><circle cx="45.1" cy="38.9" r="1.5"/><circle cx="22.2" cy="52.4" r="0.9"/><circle cx="46.1" cy="42.7" r="1.4"/><circle cx="24.3" cy="44.5" r="1.0"/><circle cx="31.9" cy="48.4" r="1.1"/><circle cx="26.5" cy="52.3" r="1.4"/><circle cx="35.9" cy="47.9" r="1.6"/><circle cx="57.1" cy="49.3" r="1.4"/><circle cx="33.8" cy="49.8" r="1.9"/><circle cx="24.3" cy="40.7" r="1.4"/><circle cx="51.3" cy="44.6" r="1.6"/><circle cx="28.4" cy="44.5" r="1.4"/><circle cx="49.3" cy="38.1" r="1.7"/><circle cx="26.8" cy="49.9" r="0.9"/><circle cx="30.5" cy="42.9" r="1.8"/><circle cx="22.0" cy="45.2" r="1.1"/><circle cx="30.7" cy="45.5" r="2.3"/><circle cx="33.8" cy="39.8" r="2.0"/><circle cx="30.2" cy="51.4" r="1.3"/><circle cx="21.5" cy="48.4" r="2.4"/><circle cx="57.9" cy="46.1" r="0.8"/><circle cx="32.3" cy="51.7" r="2.1"/><circle cx="44.3" cy="40.6" r="1.6"/><circle cx="38.1" cy="48.5" r="1.2"/><circle cx="26.2" cy="41.8" r="2.2"/><circle cx="39.6" cy="49.9" r="1.9"/><circle cx="28.1" cy="41.7" r="1.2"/><circle cx="46.0" cy="49.9" r="1.0"/><circle cx="53.7" cy="44.4" r="1.2"/><circle cx="41.3" cy="48.5" r="2.3"/><circle cx="35.9" cy="47.8" r="2.2"/><circle cx="50.0" cy="47.6" r="1.4"/><circle cx="34.0" cy="50.7" r="1.7"/><circle cx="20.7" cy="50.2" r="2.2"/><circle cx="54.6" cy="46.7" r="2.1"/><circle cx="33.4" cy="42.2" r="2.3"/><circle cx="46.2" cy="46.8" r="1.8"/><circle cx="24.7" cy="46.7" r="1.9"/><circle cx="35.0" cy="40.9" r="1.5"/><circle cx="32.3" cy="49.7" r="1.0"/><circle cx="23.4" cy="42.2" r="1.9"/><circle cx="48.9" cy="49.2" r="2.3"/><circle cx="38.5" cy="44.9" r="1.1"/><circle cx="45.4" cy="42.8" r="1.2"/><circle cx="20.3" cy="43.2" r="1.2"/><circle cx="27.7" cy="44.6" r="1.2"/><circle cx="54.9" cy="46.0" r="1.9"/><circle cx="26.2" cy="45.3" r="1.8"/><circle cx="52.0" cy="41.0" r="1.5"/><circle cx="28.6" cy="46.8" r="2.0"/><circle cx="35.0" cy="49.5" r="1.9"/><circle cx="57.0" cy="47.1" r="1.9"/><circle cx="33.3" cy="50.6" r="1.3"/><circle cx="39.0" cy="43.2" r="1.3"/><circle cx="25.2" cy="40.5" r="1.7"/><circle cx="50.5" cy="41.7" r="2.3"/><circle cx="42.8" cy="43.8" r="2.2"/><circle cx="54.1" cy="42.4" r="1.0"/><circle cx="43.1" cy="51.7" r="1.5"/><circle cx="43.5" cy="41.3" r="1.5"/><circle cx="34.4" cy="43.7" r="1.4"/><circle cx="50.7" cy="39.4" r="1.1"/><circle cx="51.2" cy="43.2" r="2.0"/><circle cx="31.6" cy="38.7" r="2.2"/><circle cx="51.7" cy="40.2" r="2.2"/><circle cx="20.9" cy="42.2" r="0.8"/><circle cx="26.5" cy="39.3" r="1.9"/><circle cx="31.3" cy="39.8" r="1.1"/><circle cx="43.1" cy="38.0" r="1.9"/><circle cx="40.4" cy="45.0" r="1.6"/><circle cx="39.2" cy="48.7" r="1.5"/><circle cx="44.1" cy="43.8" r="1.5"/><circle cx="39.6" cy="50.3" r="1.2"/><circle cx="55.1" cy="45.8" r="2.2"/><circle cx="45.9" cy="44.5" r="1.4"/><circle cx="43.1" cy="51.1" r="2.1"/><circle cx="29.5" cy="38.3" r="1.9"/><circle cx="38.1" cy="40.1" r="2.0"/><circle cx="36.1" cy="46.9" r="1.3"/><circle cx="55.5" cy="43.2" r="1.3"/><circle cx="55.1" cy="48.0" r="1.9"/><circle cx="20.5" cy="40.6" r="1.6"/><circle cx="48.8" cy="42.8" r="1.4"/><circle cx="38.4" cy="39.9" r="1.8"/><circle cx="40.4" cy="43.2" r="1.2"/><circle cx="34.6" cy="48.2" r="1.0"/><circle cx="48.3" cy="41.0" r="1.5"/><circle cx="23.9" cy="50.7" r="1.8"/><circle cx="26.6" cy="47.0" r="1.8"/><circle cx="41.9" cy="43.6" r="1.3"/><circle cx="32.6" cy="46.0" r="1.5"/></g><path d="M24 28 Q23 16 30 7 Q36 1 44 0 L58 0 L58 22 Q52 28 40 31 Q28 32 24 28Z" fill="#252525"/><path d="M30 20 Q32 8 44 4 L52 10 Q40 12 30 20Z" fill="#3a3a3a"/></svg></g><g transform="translate(60 360)"><svg width="58" height="58" viewBox="0 0 58 58"><rect width="58" height="58" fill="#d4d4d4"/><path d="M18 32 Q8 44 14 52 Q24 58 58 56" stroke="url(#lg5)" stroke-width="14" fill="none" stroke-linecap="round" stroke-linejoin="round" opacity="1"/><path d="M45 38 L48 35 L40 17" stroke="#999" stroke-width="1.4" fill="none"/><path d="M21 17 L42 36" stroke="#888" stroke-width="13.5" fill="none" stroke-linecap="round" stroke-linejoin="round" opacity="1"/><path d="M21 17 L42 36" stroke="#f2f2f2" stroke-width="12" fill="none" stroke-linecap="round" stroke-linejoin="round" opacity="1"/><path d="M23 16 L42 33" stroke="#fff" stroke-width="3" fill="none" stroke-linecap="round" stroke-linejoin="round" opacity="0.9"/><path d="M42.2 19 L62.7 -3 L57.5 -7.6 L37.8 15 Z" fill="#4a4a4a"/></svg></g><g transform="translate(120 360)"><svg width="58" height="58" viewBox="0 0 58 58"><rect width="58" height="58" fill="#d4d4d4"/><g fill="#111" opacity="1"><circle cx="14.9" cy="49.9" r="1.6"/><circle cx="28.1" cy="37.6" r="1.9"/><circle cx="41.9" cy="45.3" r="1.4"/><circle cx="23.6" cy="47.2" r="0.7"/><circle cx="44.8" cy="48.0" r="0.7"/><circle cx="21.8" cy="44.9" r="0.8"/><circle cx="14.5" cy="53.3" r="0.8"/><circle cx="31.2" cy="40.9" r="1.4"/><circle cx="39.7" cy="51.8" r="1.5"/><circle cx="28.0" cy="53.5" r="0.9"/><circle cx="25.2" cy="41.5" r="1.3"/><circle cx="24.2" cy="57.9" r="1.2"/><circle cx="28.8" cy="44.8" r="1.5"/><circle cx="33.6" cy="46.5" r="1.6"/><circle cx="22.6" cy="56.1" r="1.2"/><circle cx="33.1" cy="40.0" r="0.8"/><circle cx="10.8" cy="53.2" r="1.8"/><circle cx="23.7" cy="49.8" r="1.7"/><circle cx="25.1" cy="57.7" r="2.1"/><circle cx="32.8" cy="55.0" r="1.4"/><circle cx="23.8" cy="38.4" r="2.0"/><circle cx="41.8" cy="52.1" r="1.4"/><circle cx="18.8" cy="39.5" r="1.3"/><circle cx="22.2" cy="55.4" r="2.2"/><circle cx="39.3" cy="44.5" r="1.0"/><circle cx="16.9" cy="53.8" r="1.9"/><circle cx="45.0" cy="47.6" r="1.3"/><circle cx="32.4" cy="54.1" r="1.1"/><circle cx="30.4" cy="39.2" r="1.8"/><circle cx="8.4" cy="49.8" r="2.1"/><circle cx="9.0" cy="47.4" r="1.6"/><circle cx="43.8" cy="47.2" r="1.0"/><circle cx="25.0" cy="56.9" r="2.0"/><circle cx="44.4" cy="49.0" r="0.8"/><circle cx="30.6" cy="40.4" r="1.4"/><circle cx="15.7" cy="41.8" r="1.7"/><circle cx="37.9" cy="54.7" r="1.8"/><circle cx="37.9" cy="38.6" r="1.7"/><circle cx="24.3" cy="40.0" r="2.0"/><circle cx="20.4" cy="45.1" r="1.5"/><circle cx="33.2" cy="45.2" r="1.8"/><circle cx="37.4" cy="45.7" r="1.5"/><circle cx="10.7" cy="53.2" r="2.2"/><circle cx="22.9" cy="40.3" r="2.2"/><circle cx="11.1" cy="53.2" r="1.8"/><circle cx="26.8" cy="48.2" r="0.6"/><circle cx="35.1" cy="43.5" r="1.4"/><circle cx="24.4" cy="42.4" r="1.0"/><circle cx="10.1" cy="43.3" r="1.0"/><circle cx="37.6" cy="53.2" r="1.8"/><circle cx="27.2" cy="38.1" r="1.2"/><circle cx="28.4" cy="48.4" r="2.1"/><circle cx="11.6" cy="44.5" r="1.4"/><circle cx="38.1" cy="55.2" r="1.8"/><circle cx="34.3" cy="51.7" r="1.7"/><circle cx="44.1" cy="50.2" r="1.7"/><circle cx="18.3" cy="55.8" r="1.2"/><circle cx="33.8" cy="53.4" r="2.1"/><circle cx="21.1" cy="40.1" r="1.2"/><circle cx="14.1" cy="46.4" r="0.7"/><circle cx="20.7" cy="56.5" r="1.8"/><circle cx="16.6" cy="40.7" r="1.6"/><circle cx="36.6" cy="38.8" r="2.1"/><circle cx="21.5" cy="38.6" r="2.0"/><circle cx="14.4" cy="49.7" r="0.9"/><circle cx="33.1" cy="39.2" r="1.2"/><circle cx="26.3" cy="48.0" r="1.0"/><circle cx="15.3" cy="42.0" r="1.0"/><circle cx="15.9" cy="57.0" r="0.7"/><circle cx="33.5" cy="50.2" r="1.0"/><circle cx="8.3" cy="46.2" r="0.8"/><circle cx="21.0" cy="43.8" r="2.0"/><circle cx="41.3" cy="53.4" r="1.4"/><circle cx="24.9" cy="46.3" r="1.0"/><circle cx="41.7" cy="53.9" r="2.1"/><circle cx="10.5" cy="53.2" r="1.6"/><circle cx="34.1" cy="44.2" r="1.9"/><circle cx="22.2" cy="39.0" r="1.2"/><circle cx="20.5" cy="48.3" r="2.0"/><circle cx="29.5" cy="49.6" r="0.9"/><circle cx="9.6" cy="44.9" r="1.7"/><circle cx="12.4" cy="56.2" r="1.5"/><circle cx="25.2" cy="50.0" r="1.8"/><circle cx="9.7" cy="41.2" r="1.5"/><circle cx="37.8" cy="44.8" r="0.9"/><circle cx="43.7" cy="53.0" r="2.1"/><circle cx="40.7" cy="55.5" r="1.5"/><circle cx="24.4" cy="56.5" r="2.1"/><circle cx="22.8" cy="48.0" r="1.6"/><circle cx="39.7" cy="48.8" r="0.9"/><circle cx="40.6" cy="51.2" r="2.0"/><circle cx="25.0" cy="36.6" r="1.5"/><circle cx="42.2" cy="41.4" r="0.8"/><circle cx="9.1" cy="43.0" r="1.5"/><circle cx="9.1" cy="49.3" r="0.9"/><circle cx="12.5" cy="56.1" r="1.4"/><circle cx="25.8" cy="48.7" r="1.8"/><circle cx="39.6" cy="48.9" r="1.0"/><circle cx="26.1" cy="41.8" r="1.4"/><circle cx="19.2" cy="46.0" r="1.3"/><circle cx="9.5" cy="53.4" r="1.5"/><circle cx="41.7" cy="51.2" r="1.8"/><circle cx="35.9" cy="47.1" r="1.5"/><circle cx="17.5" cy="51.1" r="1.9"/><circle cx="23.6" cy="53.5" r="1.4"/><circle cx="27.4" cy="42.1" r="1.6"/><circle cx="33.1" cy="50.0" r="2.0"/><circle cx="39.6" cy="41.7" r="1.0"/><circle cx="40.8" cy="52.6" r="2.1"/><circle cx="16.3" cy="54.0" r="2.0"/><circle cx="36.7" cy="39.7" r="0.9"/><circle cx="16.7" cy="44.9" r="1.7"/><circle cx="17.2" cy="49.8" r="1.1"/><circle cx="35.3" cy="41.6" r="0.9"/><circle cx="37.2" cy="42.8" r="0.8"/><circle cx="45.0" cy="49.0" r="0.6"/><circle cx="38.4" cy="47.5" r="1.3"/><circle cx="29.0" cy="57.0" r="1.2"/><circle cx="34.7" cy="48.5" r="1.2"/><circle cx="22.5" cy="51.6" r="1.6"/><circle cx="27.2" cy="45.4" r="1.0"/><circle cx="35.0" cy="43.8" r="1.0"/><circle cx="32.6" cy="47.2" r="0.7"/><circle cx="28.6" cy="36.3" r="1.9"/><circle cx="21.7" cy="40.5" r="0.9"/><circle cx="14.4" cy="48.2" r="2.0"/><circle cx="25.0" cy="51.8" r="0.9"/><circle cx="37.4" cy="46.0" r="0.7"/><circle cx="18.2" cy="47.6" r="0.8"/><circle cx="16.6" cy="47.0" r="1.9"/><circle cx="29.9" cy="49.3" r="0.6"/><circle cx="20.7" cy="40.3" r="2.1"/><circle cx="23.0" cy="52.4" r="0.7"/><circle cx="28.9" cy="55.2" r="1.8"/><circle cx="38.2" cy="45.8" r="0.9"/><circle cx="22.3" cy="49.3" r="1.6"/><circle cx="24.4" cy="52.8" r="0.7"/><circle cx="21.6" cy="52.6" r="1.8"/><circle cx="14.3" cy="40.0" r="0.8"/><circle cx="35.8" cy="43.5" r="1.0"/><circle cx="23.7" cy="54.5" r="1.3"/><circle cx="37.0" cy="48.3" r="1.4"/><circle cx="31.4" cy="41.5" r="0.9"/><circle cx="28.8" cy="39.9" r="1.1"/><circle cx="15.8" cy="55.7" r="1.3"/><circle cx="17.0" cy="54.6" r="1.1"/><circle cx="36.0" cy="38.0" r="1.6"/><circle cx="26.9" cy="51.1" r="1.4"/><circle cx="23.8" cy="39.3" r="1.6"/><circle cx="42.9" cy="50.0" r="1.4"/><circle cx="21.8" cy="55.2" r="2.0"/><circle cx="14.1" cy="49.7" r="1.8"/><circle cx="36.4" cy="57.1" r="2.0"/><circle cx="18.3" cy="57.9" r="1.1"/><circle cx="24.0" cy="57.4" r="0.9"/><circle cx="24.6" cy="48.3" r="1.0"/><circle cx="19.2" cy="52.6" r="1.6"/><circle cx="39.2" cy="52.5" r="2.0"/><circle cx="37.5" cy="45.4" r="2.2"/><circle cx="35.5" cy="43.2" r="1.7"/><circle cx="27.1" cy="51.8" r="0.7"/><circle cx="29.4" cy="39.7" r="1.3"/><circle cx="37.9" cy="42.7" r="1.2"/><circle cx="22.7" cy="50.2" r="1.9"/><circle cx="34.3" cy="40.1" r="1.7"/><circle cx="22.5" cy="56.3" r="1.2"/><circle cx="34.6" cy="53.3" r="1.0"/><circle cx="22.5" cy="37.5" r="0.6"/><circle cx="32.1" cy="46.4" r="2.0"/></g><path d="M19 22 L28 13 L42 27 L33 36Z" fill="#c8b080"/><path d="M20 24 L32 36 M23 20 L36 33 M26 17 L39 30" stroke="#8a7040" stroke-width="0.8"/><path d="M42.2 24.2 L54.6 11.1 L42.9 -0.6 L29.8 11.8 Z" fill="#888"/><path d="M54.2 10.8 L82.9 -17.1 L71.1 -28.9 L43.2 -0.2 Z" fill="#888"/><path d="M41.7 23.7 L54 10.6 L43.4 -0 L30.3 12.3 Z" fill="#d0c8e0"/><path d="M53.7 10.2 L82.3 -17.7 L71.7 -28.3 L43.8 0.3 Z" fill="#ddd"/><path d="M36.7 13.1 L50.8 -1.1" stroke="#a090c0" stroke-width="3" opacity="0.6" stroke-linecap="round"/></svg></g><g transform="translate(180 360)"><svg width="58" height="58" viewBox="0 0 58 58"><rect width="58" height="58" fill="#d4d4d4"/><path d="M14 38 Q30 34 40 42 Q50 46 58 42 L58 56 Q44 58 32 54 Q18 52 14 38Z" fill="#111"/><path d="M20 28 L28 18 L38 30 L30 40 Z" fill="#c8b040"/><path d="M39.3 29 L44.7 23.1 L38 17 L32.7 23 Z" fill="#b8a898"/><path d="M44.7 23.1 L71.8 -6.3 L64.4 -13 L38 17 Z" fill="#c08030"/><path d="M41.2 17.2 L61.3 -5.1" stroke="#e8b060" stroke-width="2" opacity="0.8" stroke-linecap="round"/></svg></g><g transform="translate(240 360)"><svg width="58" height="58" viewBox="0 0 58 58"><rect width="58" height="58" fill="#d4d4d4"/><path d="M13 37 Q24 44 40 40 Q48 38 54 44 M14 42 Q26 50 42 46 Q50 44 55 48 M16 47 Q28 54 46 50" stroke="#111" stroke-width="1.8" fill="none" stroke-linecap="round" stroke-linejoin="round" opacity="1"/><ellipse cx="31" cy="28" rx="7" ry="9" transform="rotate(45 31 28)" fill="#c8b890"/><path d="M40.5 26 L51.2 14.1 L42.2 6.1 L31.5 18 Z" fill="#c8c0d8"/><path d="M50.8 13.8 L77.9 -15.6 L69 -23.6 L42.6 6.4 Z" fill="#1a1a1a"/><path d="M35.1 18.5 L44.5 8.1" stroke="#fff" stroke-width="2" opacity="0.9" stroke-linecap="round"/></svg></g><g transform="translate(300 360)"><svg width="58" height="58" viewBox="0 0 58 58"><rect width="58" height="58" fill="#d4d4d4"/><path d="M16 36 Q24 46 36 44 Q48 42 58 50" stroke="#333" stroke-width="17" fill="none" stroke-linecap="round" stroke-linejoin="round" opacity="0.8"/><path d="M22 22 L30 12 L44 26 L34 34Z" fill="#c8a860"/><path d="M44.9 25.9 L57.3 12.8 L44.2 -0.3 L31.1 12.1 Z" fill="#888"/><path d="M57.3 12.8 L85.6 -15.4 L72.4 -28.6 L44.2 -0.3 Z" fill="#888"/><path d="M44.4 25.4 L56.7 12.3 L44.7 0.3 L31.6 12.6 Z" fill="#c8c0d0"/><path d="M56.7 12.3 L85 -16 L73 -28 L44.7 0.3 Z" fill="#ddd"/><path d="M38.7 14.1 L52.8 -0.1" stroke="#4a8a4a" stroke-width="3" opacity="0.6" stroke-linecap="round"/><path d="M43.7 19 L57.8 4.9" stroke="#c04040" stroke-width="3" opacity="0.6" stroke-linecap="round"/></svg></g><g transform="translate(0 420)"><svg width="58" height="26" viewBox="0 0 58 26"><rect width="58" height="58" fill="#d4d4d4"/><path d="M28.6 31.6 L60.4 -0.2 L51.2 -9.4 L19.4 22.4 Z" fill="#78a840"/><path d="M22.6 25.6 L50.9 -2.7" stroke="#98c860" stroke-width="3" opacity="0.8" stroke-linecap="round"/></svg></g><g transform="translate(60 420)"><svg width="58" height="26" viewBox="0 0 58 26"><rect width="58" height="58" fill="#d4d4d4"/><path d="M27.6 31.6 L59.4 -0.2 L50.2 -9.4 L18.4 22.4 Z" fill="#c89a50"/><path d="M21.6 25.6 L49.9 -2.7" stroke="#e0b870" stroke-width="3" opacity="0.8" stroke-linecap="round"/></svg></g><g transform="translate(120 420)"><svg width="58" height="26" viewBox="0 0 58 26"><rect width="58" height="58" fill="#d4d4d4"/><path d="M31.6 31.6 L37.6 26.3 L27.7 16.4 L22.4 22.4 Z" fill="#c8c060"/><path d="M37.6 26.3 L69.8 -5.2 L59.2 -15.8 L27.7 16.4 Z" fill="#8a9a80"/></svg></g><g transform="translate(180 420)"><svg width="58" height="26" viewBox="0 0 58 26"><rect width="58" height="58" fill="#d4d4d4"/><path d="M30.2 31.2 L33.8 29.1 L23.9 19.2 L21.8 22.8 Z" fill="#d8a098"/><path d="M34.5 29.8 L66.3 -2 L55 -13.3 L23.2 18.5 Z" fill="#1a1a1a"/></svg></g><g transform="translate(240 420)"><svg width="58" height="26" viewBox="0 0 58 26"><rect width="58" height="58" fill="#d4d4d4"/><path d="M31.5 30.5 L35.1 28.4 L26.6 19.9 L24.5 23.5 Z" fill="#d8a8a0"/><path d="M35.1 28.4 L66.9 -3.4 L58.4 -11.9 L26.6 19.9 Z" fill="#8a5a30"/></svg></g><g transform="translate(300 420)"><svg width="58" height="26" viewBox="0 0 58 26"><rect width="58" height="58" fill="#d4d4d4"/><path d="M33.4 30.4 L39.4 27.9 L29.1 17.6 L26.6 23.6 Z" fill="#999"/><path d="M39.8 28.3 L71.6 -3.5 L60.5 -14.6 L28.7 17.2 Z" fill="#999"/><path d="M32.8 29.8 L38.8 27.4 L29.6 18.2 L27.2 24.2 Z" fill="#e8dcb8"/><path d="M39.2 27.7 L71 -4.1 L61.1 -14 L29.3 17.8 Z" fill="#b8b8b8"/></svg></g></svg></div>
<div class="abs" style="left:417px;top:1px;width:13px;height:13px;border:1px solid #4e4e4e;background:#3c3c3c"><svg class="abs" style="left:1px;top:3px" width="9" height="5"><path d="M0 5H9L4.5 0Z" fill="#9a9a9a"/></svg></div>
<div class="abs" style="left:416px;top:14px;width:15px;height:421px;background:#3c3c3c;border-left:1px solid #363636"></div><div class="abs" style="left:417px;top:15px;width:13px;height:130px;border:1px solid #585858;background:#444"></div>
<div class="abs" style="left:417px;top:435px;width:13px;height:13px;border:1px solid #4e4e4e;background:#3c3c3c"><svg class="abs" style="left:1px;top:4px" width="9" height="5"><path d="M0 0H9L4.5 5Z" fill="#9a9a9a"/></svg></div>
</div>
<div class="abs" style="left:9px;top:488px;width:331px;height:30px;background:#393939;border-radius:4px">
<span class="abs" style="left:3px;top:7px;font-size:14px;color:#8a8a8a">搜尋</span></div>
<div class="abs" style="left:346px;top:496px;width:14px;height:14px;background:#3a3a3a;border-radius:2px">
<svg class="abs" style="left:2px;top:2px" width="10" height="10" viewBox="0 0 10 10"><path d="M1.5 4.5 L4 9 L8.5 1" stroke="#dcdcdc" stroke-width="1.3" fill="none"/></svg></div>
<span class="abs" style="left:365px;top:496px;font-size:14px;color:#e0e0e0;white-space:nowrap">標籤中篩選</span>
<svg class="abs" style="left:15px;top:522px" width="15" height="15" viewBox="0 0 15 15"><path d="M12.5 1 H1 V14 H12.5" stroke="#e0e0e0" stroke-width="1.3" fill="none"/><path d="M4.5 7.5 H11 M4.5 7.5 L7.5 4.8 M4.5 7.5 L7.5 10.2" stroke="#e0e0e0" stroke-width="1.6" fill="none"/></svg>
<svg class="abs" style="left:39px;top:522px" width="14" height="15" viewBox="0 0 14 15"><rect x="0.5" y="3" width="13" height="2" fill="#e0e0e0"/><rect x="4.5" y="0.8" width="5" height="2.6" stroke="#e0e0e0" stroke-width="1.2" fill="none"/><path d="M1.8 6 H12.2 L11.6 14.5 H2.4 Z" fill="#e0e0e0"/></svg>
</div>
</body></html>
